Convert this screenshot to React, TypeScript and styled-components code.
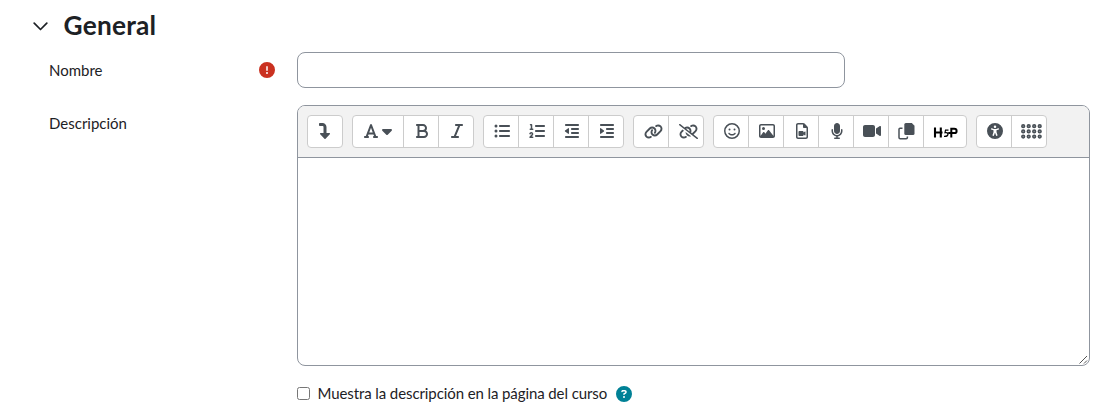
import React from "react";
import styled, { createGlobalStyle } from "styled-components";
import {
  FaTurnDown, FaFont, FaCaretDown, FaBold, FaItalic, FaListUl, FaListOl, FaOutdent, FaIndent,
  FaLink, FaLinkSlash, FaRegFaceSmile, FaRegImage, FaRegFileVideo, FaMicrophone, FaVideo,
  FaUniversalAccess, FaCircleExclamation, FaCircleQuestion,
} from "react-icons/fa6";

const Global = createGlobalStyle`
  * { box-sizing: border-box; }
  body { margin: 0; background: #fff; color: #1d2125; font: 15px/22px Lato, sans-serif; }
`;

const Page = styled.main`
  width: 1105px;
  height: 417px;
  padding: 7px 15px 0 33px;
`;

const Header = styled.header`
  display: flex;
  align-items: center;
  height: 37px;
  gap: 15.6px;
`;

const Title = styled.h3`
  margin: 0;
  padding-bottom: 1px;
  font-size: 26.25px;
  line-height: 36px;
  font-weight: 700;
  letter-spacing: 0.2px;
`;

const Row = styled.div<{ $top: number }>`
  display: flex;
  align-items: flex-start;
  margin-top: ${(p) => p.$top}px;
  padding-left: 16px;
`;

const Label = styled.div`
  display: flex;
  align-items: center;
  justify-content: space-between;
  width: 248px;
  height: 36px;
  padding-right: 22.5px;
`;

const TextInput = styled.input`
  width: 548px;
  height: 36px;
  border: 1px solid #8f959e;
  border-radius: 8px;
  outline: none;
`;

const Editor = styled.div`
  width: 793px;
  height: 261px;
  border: 1px solid #8f959e;
  border-radius: 8px;
  overflow: hidden;
  display: flex;
  flex-direction: column;
`;

const Toolbar = styled.div`
  display: flex;
  gap: 9px;
  height: 52px;
  padding: 9px;
  background: #f2f2f2;
  border-bottom: 1px solid #8f959e;
`;

const Group = styled.div`
  display: flex;
  height: 33px;
  background: #fff;
  border: 1px solid #ccc;
  border-radius: 4px;
`;

const Tool = styled.button<{ $w?: number; $shift?: number }>`
  display: flex;
  align-items: center;
  justify-content: center;
  width: ${(p) => p.$w ?? 35}px;
  padding: 0 0 1px ${(p) => p.$shift ?? 1}px;
  border: 0;
  border-right: 1px solid #ccc;
  background: none;
  color: #495057;
  font-size: 16px;
  &:last-child { border-right: 0; width: ${(p) => (p.$w ?? 35) - 1}px; }
`;

const Body = styled.div`
  flex: 1;
  display: flex;
  align-items: flex-end;
  justify-content: flex-end;
`;

const CheckRow = styled.label`
  display: flex;
  align-items: center;
  margin: 17px 0 0 264px;
  height: 21px;
  letter-spacing: -0.095px;
`;

const Check = styled.input`
  width: 13px;
  height: 13px;
  margin: 0 7.5px 0 0;
`;

const CheckText = styled.span`
  padding-bottom: 1px;
`;

const Help = styled(FaCircleQuestion)`
  margin-left: 9px;
  color: #008196;
`;

const Chevron = () => (
  <svg width="15" height="10" viewBox="0 0 15 10" fill="none" stroke="#1d2125" strokeWidth="1.7" strokeLinecap="round" strokeLinejoin="round">
    <path d="M1.2 2.2 7.5 8.500l6.3-6.3" />
  </svg>
);

const Files = () => (
  <svg width="17" height="17" viewBox="0 0 17 17">
    <path d="M4.500 5.300H2Q1 5.300 1 6.300v8.200q0 1.200 1.200 1.200h6q1.200 0 1.200-1.200V13.500" fill="none" stroke="#495057" strokeWidth="1.5" />
    <path d="M7.800 0h6L16.500 2.700v7.800q0 1.500-1.500 1.500H7.800q-1.500 0-1.500-1.500V1.500Q6.300 0 7.800 0Z" fill="#495057" />
  </svg>
);

const H5P = () => (
  <svg width="25" height="14" viewBox="0 0 25 14" fill="none" stroke="#000">
    <path d="M2 3.500v10M7.800 3.500v10" strokeWidth="2.1" />
    <path d="M2 8.500h7.500" strokeWidth="2" />
    <path d="M15.500 6.200h-3l-.5 2.500q3-.5 3 1.700-.2 2.200-4 2" strokeWidth="1.2" />
    <path d="M18.300 13.500V4.700h2.900q2.400 0 2.400 2.200t-2.400 2.200h-6" strokeWidth="2" />
  </svg>
);

const Dots = () => (
  <svg width="21" height="15" viewBox="0 0 21 15" fill="#8b9096" stroke="#495057" strokeWidth="1.5">
    {[2.2, 7.700, 13.200, 18.700].map((x) => [2.2, 7.400, 12.600].map((y) => <circle key={`${x}-${y}`} cx={x} cy={y} r="1.4" />))}
  </svg>
);

const Grip = () => (
  <svg width="10" height="10" viewBox="0 0 10 10" stroke="#555" strokeWidth="1">
    <path d="M0.500 8.500 8 1M5 8.500l3-3" />
  </svg>
);

export default function App() {
  return (
    <Page>
      <Global />
      <Header>
        <Chevron />
        <Title>General</Title>
      </Header>
      <Row $top={8}>
        <Label>Nombre<FaCircleExclamation size={16} color="#ca3120" /></Label>
        <TextInput aria-label="Nombre" />
      </Row>
      <Row $top={17}>
        <Label>Descripción</Label>
        <Editor>
          <Toolbar>
            <Group><Tool $shift={0}><FaTurnDown /></Tool></Group>
            <Group>
              <Tool $w={51}><FaFont /><FaCaretDown /></Tool>
              <Tool><FaBold /></Tool>
              <Tool><FaItalic /></Tool>
            </Group>
            <Group>
              <Tool><FaListUl /></Tool>
              <Tool><FaListOl /></Tool>
              <Tool><FaOutdent /></Tool>
              <Tool><FaIndent /></Tool>
            </Group>
            <Group>
              <Tool $shift={5}><FaLink size={19} /></Tool>
              <Tool $shift={5}><FaLinkSlash size={19} /></Tool>
            </Group>
            <Group>
              <Tool><FaRegFaceSmile /></Tool>
              <Tool><FaRegImage /></Tool>
              <Tool><FaRegFileVideo /></Tool>
              <Tool><FaMicrophone /></Tool>
              <Tool $shift={2}><FaVideo size={18} /></Tool>
              <Tool><Files /></Tool>
              <Tool $w={43} $shift={0}><H5P /></Tool>
            </Group>
            <Group>
              <Tool><FaUniversalAccess /></Tool>
              <Tool $shift={4}><Dots /></Tool>
            </Group>
          </Toolbar>
          <Body><Grip /></Body>
        </Editor>
      </Row>
      <CheckRow>
        <Check type="checkbox" />
        <CheckText>Muestra la descripción en la página del curso</CheckText>
        <Help size={16} />
      </CheckRow>
    </Page>
  );
}
